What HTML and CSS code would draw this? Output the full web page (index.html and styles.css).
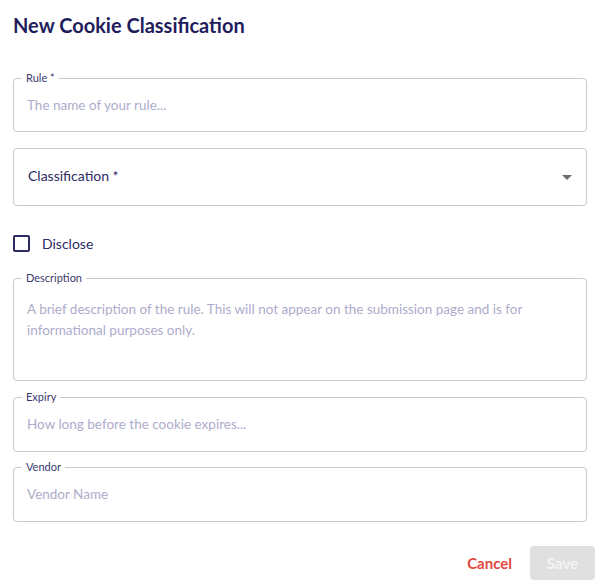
FILE: index.html
```html
<!DOCTYPE html>
<html>
  <head>
    <meta charset="utf-8">
    <meta name="viewport" content="width=device-width, initial-scale=1">
    <title>New Cookie Classification</title>
    <link rel="stylesheet" href="styles.css">
  </head>
  <body>
    <h1 class="title">New Cookie Classification</h1>
    <form class="form">
      <fieldset class="field field-rule">
        <legend>Rule *</legend>
        <input type="text" placeholder="The name of your rule...">
      </fieldset>

      <div class="select">
        <span>Classification *</span>
        <span class="caret"></span>
      </div>

      <label class="check">
        <span class="box"></span>
        <span>Disclose</span>
      </label>

      <fieldset class="field field-desc">
        <legend>Description</legend>
        <textarea placeholder="A brief description of the rule. This will not appear on the submission page and is for informational purposes only."></textarea>
      </fieldset>

      <fieldset class="field field-expiry">
        <legend>Expiry</legend>
        <input type="text" placeholder="How long before the cookie expires...">
      </fieldset>

      <fieldset class="field field-vendor">
        <legend>Vendor</legend>
        <input type="text" placeholder="Vendor Name">
      </fieldset>

      <div class="actions">
        <button type="button" class="btn-cancel">Cancel</button>
        <button type="button" class="btn-save" disabled>Save</button>
      </div>
    </form>
  </body>
</html>
```

FILE: styles.css
```css
* {
  font-family: Lato, sans-serif;
  box-sizing: border-box;
}

body {
  margin: 0;
  padding: 0 13px;
  background: #fff;
  color: #2d2b63;
}

.title {
  margin: 12px 0 0;
  font-size: 20px;
  line-height: 26px;
  font-weight: bold;
  color: #1f1d5c;
}

.form {
  display: flex;
  flex-direction: column;
  margin-top: 33px;
}

.field {
  margin: 0;
  border: 1px solid #c8c8cd;
  border-radius: 4px;
  padding: 0 13px 17px;
}

.field legend {
  margin-left: -5px;
  padding: 0 4px;
  font-size: 11px;
  line-height: 14px;
  color: #3a3870;
}

.field input,
.field textarea {
  display: block;
  width: 100%;
  margin: 11px 0 0;
  padding: 0;
  border: none;
  outline: none;
  font-size: 13.5px;
  line-height: 18px;
  height: 18px;
  color: #2d2b63;
  background: transparent;
}

.field textarea {
  height: 64px;
  line-height: 21px;
  resize: none;
  margin-top: 14px;
}

input::placeholder,
textarea::placeholder {
  color: #aeaccb;
}

.select {
  margin-top: 16px;
  height: 58px;
  border: 1px solid #c8c8cd;
  border-radius: 4px;
  padding: 0 14px 4px;
  display: flex;
  align-items: center;
  justify-content: space-between;
  font-size: 14px;
  color: #2d2b63;
}

.caret {
  width: 0;
  height: 0;
  border-left: 5px solid transparent;
  border-right: 5px solid transparent;
  border-top: 5px solid #6b6b70;
  margin-top: 4px;
}

.check {
  margin-top: 29px;
  display: flex;
  align-items: center;
  gap: 12px;
  font-size: 14px;
  color: #2d2b63;
}

.box {
  width: 17px;
  height: 17px;
  border: 2px solid #2d2b63;
  border-radius: 2px;
}

.field-desc {
  margin-top: 19px;
}

.field-expiry {
  margin-top: 9px;
  padding-bottom: 18px;
}

.field-vendor {
  margin-top: 8px;
  padding-bottom: 18px;
}

.actions {
  display: flex;
  justify-content: flex-end;
  align-items: center;
  gap: 18px;
  margin-top: 24px;
  margin-right: -8px;
}

.btn-cancel {
  border: none;
  background: none;
  padding: 0;
  font-size: 15px;
  font-weight: bold;
  color: #e0483e;
  cursor: pointer;
}

.btn-save {
  width: 65px;
  height: 34px;
  border: none;
  border-radius: 4px;
  background: #e0e0e0;
  color: #f4f4f4;
  font-size: 15px;
  font-weight: bold;
}
```
